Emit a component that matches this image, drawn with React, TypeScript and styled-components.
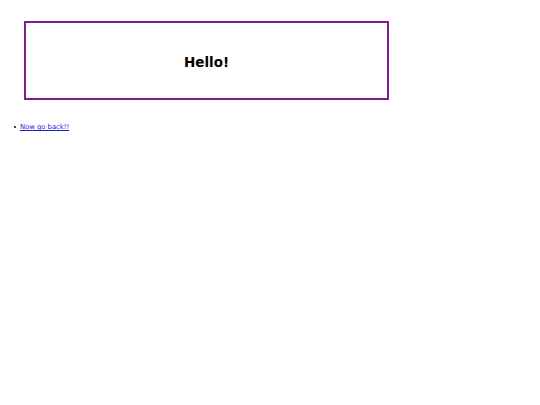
import React from "react";
import styled, { createGlobalStyle } from "styled-components";

const Global = createGlobalStyle`
  html, body { margin: 0; padding: 0; background: #fff; }
  body { font-family: "DejaVu Sans", sans-serif; }
`;

const Page = styled.div`
  display: flex;
  flex-direction: column;
  padding: 21px 0 0 24px;
`;

const Box = styled.div`
  box-sizing: border-box;
  width: 365px;
  height: 79px;
  border: 2px solid #7a1f86;
  display: flex;
  align-items: center;
  justify-content: center;
  padding-top: 2px;
`;

const Title = styled.h1`
  margin: 0;
  font-size: 13.5px;
  font-weight: bold;
  color: #000;
`;

const List = styled.ul`
  margin: 22px 0 0 -10px;
  padding: 0;
  list-style: none;
  font-size: 6.8px;
`;

const Item = styled.li`
  display: flex;
  align-items: center;
  gap: 4px;
  color: #000;
  line-height: 10px;

  &::before {
    content: "";
    width: 2px;
    height: 2px;
    border-radius: 50%;
    background: #000;
  }
`;

const Link = styled.a`
  color: #1a1ad6;
  text-decoration: underline;
`;

export default function App() {
  return (
    <>
      <Global />
      <Page>
        <Box>
          <Title>Hello!</Title>
        </Box>
        <List>
          <Item>
            <Link href="#">Now go back!!</Link>
          </Item>
        </List>
      </Page>
    </>
  );
}
